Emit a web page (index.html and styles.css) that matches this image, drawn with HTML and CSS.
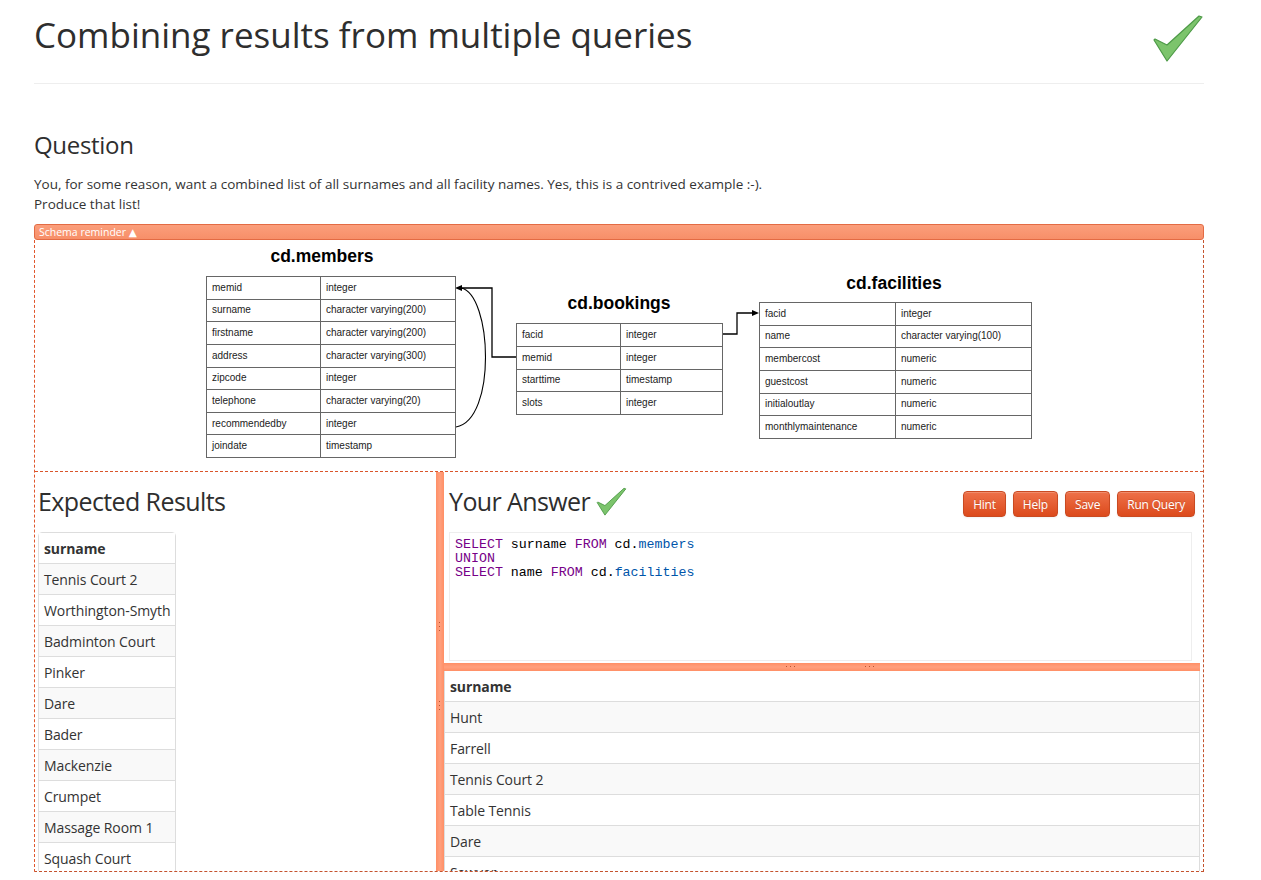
FILE: index.html
```html
<!DOCTYPE html>
<html>
<head>
<meta charset="utf-8">
<title>Combining results from multiple queries</title>
<link rel="stylesheet" href="styles.css">
</head>
<body>
<div class="page">
  <div class="header">
    <h1 class="title">Combining results from multiple queries</h1>
    <svg class="check-big" viewBox="0 0 52 50" width="52" height="50">
      <polygon points="2,26 15,47 50,3 47,2 15,31 3,25" fill="#7cc46c" stroke="#4d9a47" stroke-width="1.2" stroke-linejoin="round"/>
    </svg>
  </div>

  <h2 class="section-title">Question</h2>
  <p class="question">You, for some reason, want a combined list of all surnames and all facility names. Yes, this is a contrived example :-).<br>Produce that list!</p>

  <div class="schema-bar">Schema reminder &#9650;</div>

  <div class="workspace">
    <div class="schema">
      <svg class="connectors" viewBox="35 240 1168 231" width="1168" height="231">
        <path d="M516,357 H492 V288 H461" fill="none" stroke="#000" stroke-width="1.3"/>
        <path d="M456,427 C497,420 492,294 461,288" fill="none" stroke="#000" stroke-width="1.1"/>
        <polygon points="455,288 462,285 462,291" fill="#000"/>
        <path d="M723,334 H737 V313 H753" fill="none" stroke="#000" stroke-width="1.3"/>
        <polygon points="759,313 752,310 752,316" fill="#000"/>
      </svg>

      <div class="tbl-title members-title">cd.members</div>
      <table class="schema-tbl members-tbl">
        <tr><td class="c1">memid</td><td>integer</td></tr>
        <tr><td class="c1">surname</td><td>character varying(200)</td></tr>
        <tr><td class="c1">firstname</td><td>character varying(200)</td></tr>
        <tr><td class="c1">address</td><td>character varying(300)</td></tr>
        <tr><td class="c1">zipcode</td><td>integer</td></tr>
        <tr><td class="c1">telephone</td><td>character varying(20)</td></tr>
        <tr><td class="c1">recommendedby</td><td>integer</td></tr>
        <tr><td class="c1">joindate</td><td>timestamp</td></tr>
      </table>

      <div class="tbl-title bookings-title">cd.bookings</div>
      <table class="schema-tbl bookings-tbl">
        <tr><td class="c1">facid</td><td>integer</td></tr>
        <tr><td class="c1">memid</td><td>integer</td></tr>
        <tr><td class="c1">starttime</td><td>timestamp</td></tr>
        <tr><td class="c1">slots</td><td>integer</td></tr>
      </table>

      <div class="tbl-title facilities-title">cd.facilities</div>
      <table class="schema-tbl facilities-tbl">
        <tr><td class="c1">facid</td><td>integer</td></tr>
        <tr><td class="c1">name</td><td>character varying(100)</td></tr>
        <tr><td class="c1">membercost</td><td>numeric</td></tr>
        <tr><td class="c1">guestcost</td><td>numeric</td></tr>
        <tr><td class="c1">initialoutlay</td><td>numeric</td></tr>
        <tr><td class="c1">monthlymaintenance</td><td>numeric</td></tr>
      </table>
    </div>

    <div class="panes">
      <div class="pane-left">
        <h3 class="pane-title">Expected Results</h3>
        <table class="result-tbl expected-tbl">
          <thead><tr><th>surname</th></tr></thead>
          <tbody>
            <tr><td>Tennis Court 2</td></tr>
            <tr><td>Worthington-Smyth</td></tr>
            <tr><td>Badminton Court</td></tr>
            <tr><td>Pinker</td></tr>
            <tr><td>Dare</td></tr>
            <tr><td>Bader</td></tr>
            <tr><td>Mackenzie</td></tr>
            <tr><td>Crumpet</td></tr>
            <tr><td>Massage Room 1</td></tr>
            <tr><td>Squash Court</td></tr>
          </tbody>
        </table>
      </div>

      <div class="vsplit">
        <span class="vdots vdots-a"></span>
        <span class="vdots vdots-b"></span>
      </div>

      <div class="pane-right">
        <div class="answer-head">
          <div class="answer-title-wrap">
            <h3 class="pane-title">Your Answer</h3>
            <svg class="check-small" viewBox="0 0 52 50" width="31" height="30">
              <polygon points="2,26 15,47 50,3 47,2 15,31 3,25" fill="#7cc46c" stroke="#4d9a47" stroke-width="1.5" stroke-linejoin="round"/>
            </svg>
          </div>
          <div class="buttons">
            <button class="btn">Hint</button>
            <button class="btn">Help</button>
            <button class="btn">Save</button>
            <button class="btn">Run Query</button>
          </div>
        </div>
        <div class="editor">
<pre class="code"><span class="kw">SELECT</span> surname <span class="kw">FROM</span> cd.<span class="var">members</span>
<span class="kw">UNION</span>
<span class="kw">SELECT</span> name <span class="kw">FROM</span> cd.<span class="var">facilities</span></pre>
        </div>
        <div class="hsplit">
          <span class="hdots hdots-a"></span>
          <span class="hdots hdots-b"></span>
        </div>
        <table class="result-tbl answer-tbl">
          <thead><tr><th>surname</th></tr></thead>
          <tbody>
            <tr><td>Hunt</td></tr>
            <tr><td>Farrell</td></tr>
            <tr><td>Tennis Court 2</td></tr>
            <tr><td>Table Tennis</td></tr>
            <tr><td>Dare</td></tr>
            <tr><td>Sawyer</td></tr>
          </tbody>
        </table>
      </div>
    </div>
  </div>
</div>
</body>
</html>
```

FILE: styles.css
```css
* { box-sizing: border-box; }

html, body {
  margin: 0;
  padding: 0;
  background: #fff;
}

body {
  font-family: "Open Sans", "DejaVu Sans", sans-serif;
  color: #333;
  font-size: 14px;
  overflow: hidden;
}

.page {
  width: 1170px;
  margin-left: 34px;
}

/* Header */
.header {
  display: flex;
  justify-content: space-between;
  align-items: flex-start;
  height: 84px;
  border-bottom: 1px solid #eee;
}

.title {
  margin: 15px 0 0 0;
  font-size: 35px;
  line-height: 40px;
  font-weight: 400;
  color: #2e2e2e;
  letter-spacing: 0;
}

.check-big {
  margin-top: 14px;
  display: block;
}

.section-title {
  margin: 48px 0 0 0;
  font-size: 24px;
  line-height: 26px;
  font-weight: 400;
  color: #2e2e2e;
  letter-spacing: -0.3px;
}

.question {
  margin: 16px 0 10px 0;
  font-size: 13.5px;
  line-height: 20px;
  letter-spacing: 0;
  color: #333;
}

/* Schema bar */
.schema-bar {
  height: 16px;
  background: linear-gradient(#fb9e7b, #f78f69);
  border: 1px solid #e36b44;
  border-radius: 3px;
  color: #fff;
  font-size: 10.5px;
  line-height: 14px;
  padding-left: 4px;
}

.workspace {
  border-left: 1px dashed #e0552c;
  border-right: 1px dashed #c4532e;
  border-bottom: 1px dashed #c4532e;
}

.schema {
  position: relative;
  height: 231px;
}

.connectors {
  position: absolute;
  left: 0;
  top: 0;
}

.tbl-title {
  position: absolute;
  width: 200px;
  text-align: center;
  font-family: "Liberation Sans", Arial, sans-serif;
  font-weight: 700;
  font-size: 17.5px;
  line-height: 20px;
  color: #000;
}

.members-title { left: 187px; top: 6px; }
.bookings-title { left: 484px; top: 53px; }
.facilities-title { left: 759px; top: 33px; }

.schema-tbl {
  position: absolute;
  border-collapse: collapse;
  font-family: "Liberation Sans", Arial, sans-serif;
  font-size: 10px;
  color: #222;
  background: #fff;
}

.schema-tbl td {
  border: 1px solid #666;
  padding: 0 0 0 5px;
  line-height: 12px;
  white-space: nowrap;
}

.members-tbl { left: 171px; top: 36px; width: 250px; height: 182px; }
.members-tbl .c1 { width: 114px; }

.bookings-tbl { left: 481px; top: 83px; width: 207px; height: 92px; }
.bookings-tbl .c1 { width: 104px; }

.facilities-tbl { left: 724px; top: 62px; width: 273px; height: 137px; }
.facilities-tbl .c1 { width: 136px; }

/* Panes */
.panes {
  display: flex;
  height: 400px;
  border-top: 1px dashed #d9552c;
  overflow: hidden;
}

.pane-left {
  width: 401px;
  flex: none;
  padding-left: 3px;
  overflow: hidden;
}

.pane-title {
  margin: 14px 0 0 0;
  font-size: 25px;
  line-height: 30px;
  font-weight: 400;
  color: #2e2e2e;
  letter-spacing: -0.6px;
}

.result-tbl {
  border-collapse: separate;
  border-spacing: 0;
  font-size: 14px;
  letter-spacing: -0.1px;
  color: #333;
}

.result-tbl th,
.result-tbl td {
  height: 31px;
  padding: 0 5px;
  text-align: left;
  border-top: 1px solid #ddd;
  white-space: nowrap;
}

.result-tbl th {
  height: 30px;
  font-weight: 700;
  border-top: none;
  background: #fff;
}

.result-tbl tbody tr:nth-child(odd) td { background: #f9f9f9; }

.expected-tbl {
  margin-top: 16px;
  width: 138px;
  border: 1px solid #ddd;
  border-radius: 4px 4px 0 0;
}

/* Vertical splitter */
.vsplit {
  width: 8px;
  flex: none;
  background: linear-gradient(to right, #ff8f66, #ffa07e, #ff8f66);
  position: relative;
}

.vdots {
  position: absolute;
  left: 3px;
  width: 1px;
  height: 9px;
  background: repeating-linear-gradient(to bottom, #b9532f 0 1px, transparent 1px 4px);
}

.vdots-a { top: 150px; }
.vdots-b { top: 229px; }

/* Right pane */
.pane-right {
  flex: 1;
  padding-right: 3px;
  overflow: hidden;
}

.answer-head {
  display: flex;
  justify-content: space-between;
  align-items: flex-start;
  height: 60px;
  padding: 0 5px 0 5px;
}

.answer-title-wrap {
  display: flex;
  align-items: flex-start;
}

.check-small {
  margin: 15px 0 0 6px;
  display: block;
}

.buttons {
  display: flex;
  gap: 7px;
  margin-top: 19px;
}

.btn {
  height: 26px;
  padding: 0 9px;
  border: 1px solid #c94a22;
  border-radius: 4px;
  background: linear-gradient(#ee7149, #dc4a1c);
  color: #fff;
  font-family: "Open Sans", "DejaVu Sans", sans-serif;
  font-size: 12px;
  letter-spacing: -0.2px;
  text-shadow: 0 -1px 0 rgba(0,0,0,0.15);
  box-shadow: inset 0 1px 0 rgba(255,255,255,0.2), 0 1px 2px rgba(0,0,0,0.05);
}

.editor {
  margin: 0 8px 0 5px;
  height: 129px;
  border: 1px solid #eee;
  background: #fff;
}

.code {
  margin: 0;
  padding: 5px 0 0 5px;
  font-family: "Liberation Mono", "DejaVu Sans Mono", monospace;
  font-size: 13.3px;
  line-height: 14px;
  color: #000;
}

.kw { color: #708; }
.var { color: #05a; }

.hsplit {
  margin-top: 2px;
  height: 8px;
  background: linear-gradient(#ff8f66, #ffa07e, #ff8f66);
  position: relative;
}

.hdots {
  position: absolute;
  top: 3px;
  width: 9px;
  height: 1px;
  background: repeating-linear-gradient(to right, #b9532f 0 1px, transparent 1px 4px);
}

.hdots-a { left: 342px; }
.hdots-b { left: 421px; }

.answer-tbl {
  width: 100%;
  border: 1px solid #ddd;
  border-top: none;
}
```
